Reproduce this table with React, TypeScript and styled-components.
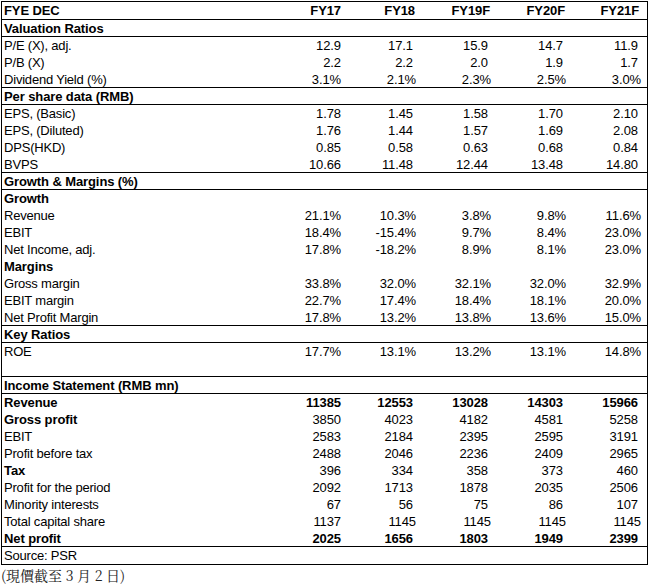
import React from "react";
import styled, { createGlobalStyle } from "styled-components";

const GlobalStyle = createGlobalStyle`
  html, body {
    margin: 0;
    padding: 0;
    background: #ffffff;
  }
  body {
    font-family: "Liberation Sans", Arial, sans-serif;
    color: #000000;
  }
`;

const Page = styled.div`
  width: 649px;
  height: 584px;
  padding: 1px 1px 0 1px;
  box-sizing: border-box;
  overflow: hidden;
`;

const Table = styled.div`
  width: 647px;
  border: 1px solid #000;
  box-sizing: border-box;
  display: flex;
  flex-direction: column;
`;

const Row = styled.div<{ $rule?: boolean; $tall?: boolean }>`
  display: grid;
  grid-template-columns: 264px repeat(5, 75px) 1fr;
  height: ${(p) => (p.$tall ? 18 : 17)}px;
  box-sizing: border-box;
  border-bottom: ${(p) => (p.$rule ? "1px solid #000" : "none")};
  font-size: 13px;
  line-height: ${(p) => (p.$tall ? 18 : 17)}px;
  white-space: nowrap;
`;

const Label = styled.div<{ $bold?: boolean }>`
  padding-left: 2px;
  font-weight: ${(p) => (p.$bold ? 700 : 400)};
  letter-spacing: ${(p) => (p.$bold ? "-0.1px" : "-0.2px")};
`;

const Value = styled.div<{ $bold?: boolean; $inset: number }>`
  text-align: right;
  padding-right: ${(p) => p.$inset}px;
  font-weight: ${(p) => (p.$bold ? 700 : 400)};
  letter-spacing: -0.1px;
`;

const Footer = styled.div`
  font-family: "Noto Serif CJK TC", "Noto Serif CJK SC", "Liberation Serif",
    "Noto Sans CJK TC", serif;
  font-size: 14px;
  line-height: 20px;
  color: #222;
  padding-left: 0;
`;

type Line = {
  label: string;
  values?: string[];
  boldLabel?: boolean;
  boldValues?: boolean;
  rule?: boolean;
  flush?: boolean;
  header?: boolean;
};

const lines: Line[] = [
  { label: "FYE DEC", values: ["FY17", "FY18", "FY19F", "FY20F", "FY21F"], boldLabel: true, boldValues: true, rule: true, header: true },
  { label: "Valuation Ratios", boldLabel: true, rule: true },
  { label: "P/E (X), adj.", values: ["12.9", "17.1", "15.9", "14.7", "11.9"] },
  { label: "P/B (X)", values: ["2.2", "2.2", "2.0", "1.9", "1.7"] },
  { label: "Dividend Yield (%)", values: ["3.1%", "2.1%", "2.3%", "2.5%", "3.0%"], rule: true },
  { label: "Per share data (RMB)", boldLabel: true, rule: true },
  { label: "EPS, (Basic)", values: ["1.78", "1.45", "1.58", "1.70", "2.10"] },
  { label: "EPS, (Diluted)", values: ["1.76", "1.44", "1.57", "1.69", "2.08"] },
  { label: "DPS(HKD)", values: ["0.85", "0.58", "0.63", "0.68", "0.84"] },
  { label: "BVPS", values: ["10.66", "11.48", "12.44", "13.48", "14.80"], rule: true },
  { label: "Growth & Margins (%)", boldLabel: true, rule: true },
  { label: "Growth", boldLabel: true },
  { label: "Revenue", values: ["21.1%", "10.3%", "3.8%", "9.8%", "11.6%"] },
  { label: "EBIT", values: ["18.4%", "-15.4%", "9.7%", "8.4%", "23.0%"] },
  { label: "Net Income, adj.", values: ["17.8%", "-18.2%", "8.9%", "8.1%", "23.0%"] },
  { label: "Margins", boldLabel: true },
  { label: "Gross margin", values: ["33.8%", "32.0%", "32.1%", "32.0%", "32.9%"] },
  { label: "EBIT margin", values: ["22.7%", "17.4%", "18.4%", "18.1%", "20.0%"] },
  { label: "Net Profit Margin", values: ["17.8%", "13.2%", "13.8%", "13.6%", "15.0%"], rule: true },
  { label: "Key Ratios", boldLabel: true, rule: true },
  { label: "ROE", values: ["17.7%", "13.1%", "13.2%", "13.1%", "14.8%"] },
  { label: "", rule: true },
  { label: "Income Statement (RMB mn)", boldLabel: true, rule: true },
  { label: "Revenue", values: ["11385", "12553", "13028", "14303", "15966"], boldLabel: true, boldValues: true },
  { label: "Gross profit", values: ["3850", "4023", "4182", "4581", "5258"], boldLabel: true },
  { label: "EBIT", values: ["2583", "2184", "2395", "2595", "3191"] },
  { label: "Profit before tax", values: ["2488", "2046", "2236", "2409", "2965"] },
  { label: "Tax", values: ["396", "334", "358", "373", "460"], boldLabel: true },
  { label: "Profit for the period", values: ["2092", "1713", "1878", "2035", "2506"] },
  { label: "Minority interests", values: ["67", "56", "75", "86", "107"] },
  { label: "Total capital share", values: ["1137", "1145", "1145", "1145", "1145"], flush: true },
  { label: "Net profit", values: ["2025", "1656", "1803", "1949", "2399"], boldLabel: true, boldValues: true, rule: true },
  { label: "Source: PSR" },
];

function insetFor(line: Line, value: string, col: number): number {
  if (col === 0) return 0;
  if (line.header) return col === 4 ? 2 : 1;
  if (value.endsWith("%") || line.flush) return col === 4 ? -1 : 0;
  return col === 4 ? 3 : 3;
}

export default function App() {
  return (
    <>
      <GlobalStyle />
      <Page>
        <Table>
          {lines.map((line, i) => (
            <Row key={i} $rule={line.rule} $tall={i === 0}>
              <Label $bold={line.boldLabel}>{line.label}</Label>
              {(line.values ?? ["", "", "", "", ""]).map((v, c) => (
                <Value key={c} $bold={line.boldValues} $inset={insetFor(line, v, c)}>
                  {v}
                </Value>
              ))}
            </Row>
          ))}
        </Table>
        <Footer>(現價截至 3 月 2 日)</Footer>
      </Page>
    </>
  );
}
